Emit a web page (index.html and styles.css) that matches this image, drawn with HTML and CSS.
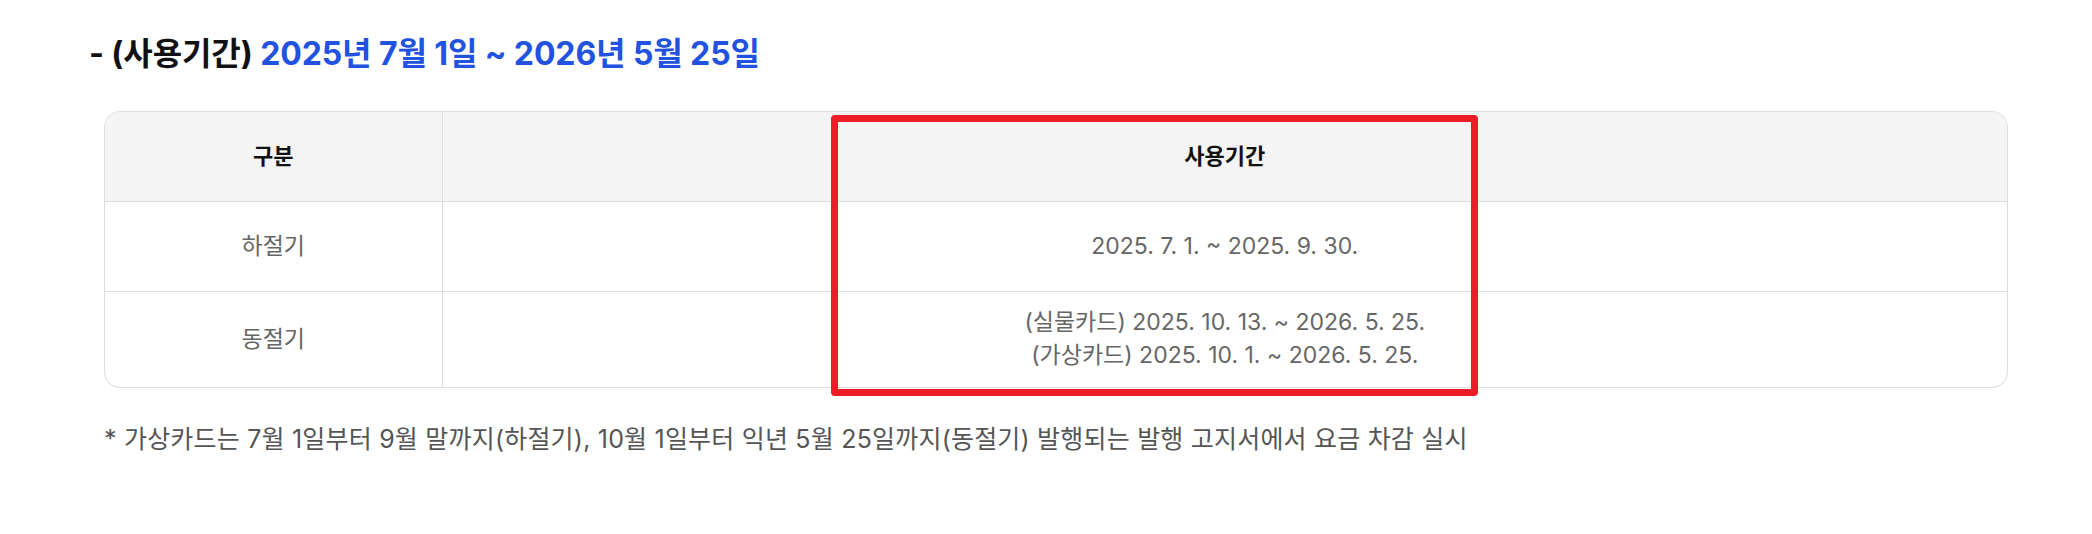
FILE: index.html
```html
<!DOCTYPE html>
<html lang="ko">
<head>
<meta charset="utf-8">
<link rel="stylesheet" href="styles.css">
</head>
<body>
<section class="page">
  <h3 class="title">- (사용기간) <span class="hl">2025년 7월 1일 ~ 2026년 5월 25일</span></h3>
  <div class="table-wrap">
    <table class="tbl">
      <colgroup><col class="c1"><col class="c2"></colgroup>
      <thead>
        <tr><th>구분</th><th>사용기간</th></tr>
      </thead>
      <tbody>
        <tr><td>하절기</td><td>2025. 7. 1. ~ 2025. 9. 30.</td></tr>
        <tr class="tall"><td>동절기</td><td>(실물카드) 2025. 10. 13. ~ 2026. 5. 25.<br>(가상카드) 2025. 10. 1. ~ 2026. 5. 25.</td></tr>
      </tbody>
    </table>
    <div class="highlight"></div>
  </div>
  <p class="note">* 가상카드는 7월 1일부터 9월 말까지(하절기), 10월 1일부터 익년 5월 25일까지(동절기) 발행되는 발행 고지서에서 요금 차감 실시</p>
</section>
</body>
</html>
```
FILE: styles.css
```css
* { box-sizing: border-box; }
html, body { margin: 0; padding: 0; background: #fff; }
body {
  font-family: "Inter", "Noto Sans CJK KR", sans-serif;
  color: #111;
}
.page {
  padding: 32px 84px 0 89px;
  width: 2092px;
}
.title {
  margin: 0;
  font-size: 32px;
  font-weight: 700;
  line-height: 44px;
  letter-spacing: -0.1px;
  color: #111;
}
.title .hl { color: #2152e0; }
.table-wrap {
  position: relative;
  margin: 35px 0 0 15px;
  border: 1px solid #dcdcdc;
  border-radius: 16px;
}
.tbl {
  width: 100%;
  border-collapse: collapse;
  table-layout: fixed;
}
.tbl col.c1 { width: 337px; }
.tbl th, .tbl td {
  text-align: center;
  vertical-align: middle;
  font-size: 22px;
  line-height: 33px;
  padding: 0;
}
.tbl th {
  height: 89px;
  background: #f4f4f4;
  font-weight: 600;
  color: #111;
  border-bottom: 1px solid #dcdcdc;
}
.tbl thead th:first-child { border-top-left-radius: 15px; }
.tbl thead th:last-child { border-top-right-radius: 15px; }
.tbl td {
  height: 90px;
  color: #666;
  font-weight: 400;
  font-size: 23px;
}
.tbl tbody tr:first-child td { border-bottom: 1px solid #dcdcdc; }
.tbl tr.tall td { height: 96px; }
.tbl th:first-child, .tbl td:first-child { border-right: 1px solid #dcdcdc; }
.highlight {
  position: absolute;
  left: 726px;
  top: 3px;
  width: 647px;
  height: 281px;
  border: 7px solid #ee1c25;
  border-radius: 4px;
  pointer-events: none;
}
.note {
  margin: 34px 0 0 15px;
  font-size: 25px;
  line-height: 34px;
  letter-spacing: 0.2px;
  color: #555;
}
```
